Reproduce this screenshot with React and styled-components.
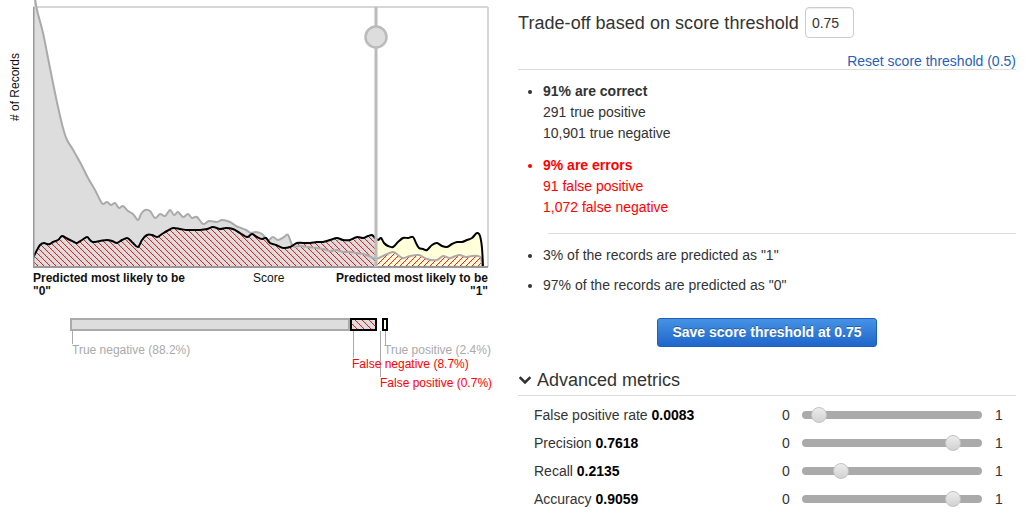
import React from 'react';
import styled, { createGlobalStyle } from 'styled-components';

const GlobalStyle = createGlobalStyle`
  html, body { margin: 0; padding: 0; background: #fff; }
  body { font-family: "Liberation Sans", Arial, Helvetica, sans-serif; color: #333; }
`;

const Page = styled.div`
  display: flex;
  width: 1035px;
  height: 514px;
  overflow: hidden;
`;

const LeftCol = styled.div`
  width: 505px;
  flex: none;
`;

const ChartRow = styled.div`
  display: flex;
  height: 268px;
`;

const AxisTitle = styled.div`
  width: 33px;
  flex: none;
  display: flex;
  justify-content: center;
  align-items: flex-start;
  padding: 53px 3px 0 0;
  box-sizing: border-box;
`;

const AxisText = styled.span`
  writing-mode: vertical-rl;
  transform: rotate(180deg);
  font-size: 12px;
  line-height: 12px;
  color: #111;
  white-space: nowrap;
`;

const ChartSvg = styled.svg`
  display: block;
  flex: none;
`;

const ScaleLabels = styled.div`
  display: flex;
  margin-left: 33px;
  width: 455px;
  padding-top: 4px;
  font-size: 12px;
  line-height: 13px;
  color: #111;
`;

const EndLabel = styled.div`
  font-weight: bold;
  flex: ${p => (p.$grow ? 1 : 'none')};
  width: ${p => (p.$grow ? 'auto' : '220px')};
  text-align: ${p => p.$align};
`;

const MidLabel = styled.div`
  flex: none;
`;

const BarSvg = styled.svg`
  display: block;
  margin-top: 12px;
  overflow: visible;
`;

const TickLabel = styled.text`
  font-size: 12px;
  font-family: "Liberation Sans", Arial, sans-serif;
  fill: ${p => (p.$red ? '#f00' : '#aaa')};
`;

const RightCol = styled.div`
  width: 530px;
  flex: none;
  box-sizing: border-box;
  padding: 0 19px 0 13px;
`;

const Header = styled.div`
  display: flex;
  align-items: center;
  gap: 6px;
  margin-top: 7px;
  height: 31px;
`;

const Title = styled.h2`
  margin: 0;
  font-size: 18px;
  font-weight: normal;
  color: #333;
  line-height: 22px;
  letter-spacing: 0.05px;
`;

const ThresholdInput = styled.input`
  width: 49px;
  height: 31px;
  box-sizing: border-box;
  border: 1px solid #ccc;
  border-radius: 4px;
  padding: 0 0 0 6px;
  font-family: inherit;
  font-size: 14px;
  color: #333;
  box-shadow: inset 0 1px 1px rgba(0, 0, 0, 0.075);
  outline: none;
`;

const ResetRow = styled.div`
  margin-top: 15px;
  height: 16px;
  line-height: 16px;
  text-align: right;
  border-bottom: 1px solid #ddd;
`;

const ResetLink = styled.a`
  font-size: 14px;
  color: #2a5fb4;
  text-decoration: none;
  cursor: pointer;
`;

const BulletList = styled.ul`
  list-style: none;
  margin: 0;
  padding: 11px 0 0 25px;
`;

const Item = styled.li`
  position: relative;
  font-size: 14px;
  line-height: 21px;
  color: ${p => (p.$red ? '#f00' : '#333')};
  margin-top: ${p => p.$gap || 0}px;
  &::before {
    content: '';
    position: absolute;
    left: -15px;
    top: 9px;
    width: 4px;
    height: 4px;
    border-radius: 50%;
    background: currentColor;
  }
`;

const Strong = styled.strong`
  font-weight: bold;
`;

const Divider = styled.hr`
  margin: 15px 0 0 30px;
  border: 0;
  border-top: 1px solid #ddd;
  height: 0;
`;

const ButtonRow = styled.div`
  display: flex;
  justify-content: center;
  margin-top: 22px;
`;

const SaveButton = styled.button`
  height: 29px;
  padding: 0 14px;
  border: 1px solid #1d5fbf;
  border-radius: 3px;
  background: linear-gradient(#4592e6, #1f66c9);
  color: #fff;
  font-family: inherit;
  font-size: 14px;
  font-weight: bold;
  line-height: 27px;
  text-shadow: 0 -1px 0 rgba(0, 0, 0, 0.3);
  cursor: pointer;
`;

const AdvancedHeader = styled.div`
  display: flex;
  align-items: center;
  gap: 6px;
  margin-top: 22px;
  padding: 0 0 4px 1px;
  border-bottom: 1px solid #ddd;
  font-size: 18px;
  line-height: 22px;
  color: #333;
`;

const MetricList = styled.div`
  margin-top: 5px;
`;

const MetricRow = styled.div`
  display: flex;
  align-items: center;
  height: 28px;
  padding-left: 16px;
  font-size: 14px;
`;

const MetricLabel = styled.div`
  width: 248px;
  flex: none;
  color: #333;
  & b { color: #000; }
`;

const RangeEnd = styled.div`
  width: ${p => p.$w}px;
  flex: none;
  margin-left: ${p => p.$ml || 0}px;
  color: #333;
`;

const Track = styled.div`
  position: relative;
  width: 180px;
  height: 8px;
  border-radius: 4px;
  background: #aaa;
  flex: none;
`;

const Thumb = styled.div`
  position: absolute;
  top: -4px;
  width: 16px;
  height: 16px;
  box-sizing: border-box;
  border-radius: 50%;
  border: 1px solid #c3c3c3;
  background: linear-gradient(#ececec, #d2d2d2);
  margin-left: -8px;
`;

function smooth(pts) {
  let d = `M${pts[0][0]},${pts[0][1]}`;
  for (let i = 0; i < pts.length - 1; i++) {
    const p0 = pts[i - 1] || pts[i];
    const p1 = pts[i];
    const p2 = pts[i + 1];
    const p3 = pts[i + 2] || p2;
    const c1x = p1[0] + (p2[0] - p0[0]) / 6;
    const c1y = p1[1] + (p2[1] - p0[1]) / 6;
    const c2x = p2[0] - (p3[0] - p1[0]) / 6;
    const c2y = p2[1] - (p3[1] - p1[1]) / 6;
    d += ` C${c1x.toFixed(2)},${c1y.toFixed(2)} ${c2x.toFixed(2)},${c2y.toFixed(2)} ${p2[0]},${p2[1]}`;
  }
  return d;
}

const grayPts = [
  [34, -8], [37, 10], [43, 33], [48, 58], [53, 83], [58, 107], [63, 128], [67, 140], [72, 148], [76, 155],
  [82, 166], [88, 178], [95, 190], [100, 200], [103, 204], [107, 202], [111, 205], [115, 203], [119, 208],
  [123, 206], [128, 211], [133, 214], [138, 220], [141, 214], [145, 210], [150, 211], [155, 218], [160, 214],
  [165, 216], [170, 210], [174, 215], [178, 212], [183, 217], [188, 214], [192, 218], [197, 217], [203, 224],
  [209, 221], [217, 222], [222, 220], [230, 222], [236, 226], [241, 228], [246, 230], [251, 233], [256, 232],
  [262, 234], [268, 240], [273, 237], [278, 240], [284, 237], [288, 235], [293, 246], [300, 246], [308, 247],
  [316, 248], [323, 249], [330, 251], [337, 250], [343, 252], [350, 252], [357, 253], [363, 254], [369, 256],
  [375, 259], [379, 258], [385, 255], [393, 252], [398, 255], [403, 258], [410, 256], [419, 255], [427, 259],
  [437, 260], [443, 256], [450, 258], [459, 255], [466, 257], [472, 256], [478, 256], [481, 258], [482, 267]
];

const blackPts = [
  [33, 258], [36, 252], [40, 245], [44, 243], [47, 244], [50, 244], [53, 242], [58, 240], [62, 236], [66, 238],
  [70, 240], [74, 242], [77, 243], [82, 240], [87, 237], [90, 240], [93, 242], [100, 241], [107, 240], [112, 241],
  [117, 243], [122, 240], [127, 238], [130, 240], [133, 243], [138, 247], [142, 240], [147, 235], [152, 235],
  [157, 237], [162, 234], [167, 231], [173, 228], [180, 229], [187, 230], [193, 230], [200, 230], [207, 229],
  [213, 227], [220, 229], [226, 228], [233, 229], [240, 233], [247, 237], [252, 234], [257, 237], [262, 239],
  [266, 238], [270, 243], [276, 245], [283, 248], [290, 247], [297, 243], [303, 243], [310, 243], [317, 242],
  [323, 242], [330, 240], [337, 238], [343, 240], [350, 240], [357, 237], [363, 238], [368, 236], [372, 235],
  [375, 238], [378, 240], [381, 238], [384, 243], [388, 246], [393, 247], [398, 242], [403, 238], [408, 238],
  [413, 237], [416, 243], [419, 248], [423, 249], [427, 250], [432, 245], [437, 243], [442, 246], [447, 247],
  [452, 244], [457, 242], [462, 242], [467, 240], [472, 238], [477, 233], [480, 236], [482, 248], [483, 267]
];

const grayLine = smooth(grayPts);
const blackLine = smooth(blackPts);
const grayArea = `${grayLine} L482,267 L33,267 Z`;
const blackArea = `${blackLine} L483,267 L33,267 Z`;

const THRESH_X = 376;

function DistributionChart() {
  return (
    <ChartSvg width="462" height="268" viewBox="33 0 462 268">
      <defs>
        <pattern id="hatchBack" width="6" height="6" patternUnits="userSpaceOnUse">
          <rect width="6" height="6" fill="#ddd" />
          <path d="M0,0 L6,6 M-1,5 L1,7 M5,-1 L7,1" stroke="#f00" strokeWidth="0.9" />
        </pattern>
        <pattern id="hatchFwd" width="6" height="6" patternUnits="userSpaceOnUse">
          <path d="M0,6 L6,0 M-1,1 L1,-1 M5,7 L7,5" stroke="#f00" strokeWidth="0.9" />
        </pattern>
        <clipPath id="leftSide">
          <rect x="33" y="0" width={THRESH_X - 33} height="268" />
        </clipPath>
        <clipPath id="rightSide">
          <rect x={THRESH_X} y="0" width={490 - THRESH_X} height="268" />
        </clipPath>
      </defs>

      <line x1="33" y1="7" x2="488" y2="7" stroke="#d6d6d6" strokeWidth="2" />
      <line x1="488" y1="7" x2="488" y2="267" stroke="#d6d6d6" strokeWidth="2" />

      <g clipPath="url(#leftSide)">
        <path d={grayArea} fill="#ddd" />
        <path d={blackArea} fill="url(#hatchBack)" />
      </g>
      <g clipPath="url(#rightSide)">
        <path d={blackArea} fill="#ffffd9" />
        <path d={grayArea} fill="url(#hatchFwd)" />
      </g>

      <path d={grayLine} fill="none" stroke="#aaa" strokeWidth="2" strokeLinejoin="round" />
      <path d={blackLine} fill="none" stroke="#000" strokeWidth="2" strokeLinejoin="round" />

      <line x1="33.5" y1="7" x2="33.5" y2="268" stroke="#999" strokeWidth="2" />
      <line x1="33" y1="267" x2="488" y2="267" stroke="#999" strokeWidth="2" />

      <line x1={THRESH_X} y1="7" x2={THRESH_X} y2="267" stroke="#bbb" strokeWidth="3" />
      <circle cx={THRESH_X} cy="37" r="10.5" fill="#ddd" stroke="#bbb" strokeWidth="2.5" />
    </ChartSvg>
  );
}

function OutcomeBar() {
  return (
    <BarSvg width="500" height="90" viewBox="0 310 500 90">
      <defs>
        <pattern id="barHatch" width="7" height="7" patternUnits="userSpaceOnUse">
          <rect width="7" height="7" fill="#ddd" />
          <path d="M0,0 L7,7 M-1,6 L1,8 M6,-1 L8,1" stroke="#f00" strokeWidth="0.9" />
        </pattern>
      </defs>
      <rect x="71" y="319" width="278" height="11" fill="#ddd" stroke="#aaa" strokeWidth="2" />
      <rect x="351" y="319" width="25" height="11" fill="url(#barHatch)" stroke="#000" strokeWidth="2" />
      <rect x="383" y="319" width="4" height="11" fill="#ffffd9" stroke="#000" strokeWidth="2" />

      <line x1="72.5" y1="331" x2="72.5" y2="344" stroke="#aaa" strokeWidth="1" />
      <line x1="353.5" y1="331" x2="353.5" y2="358" stroke="#aaa" strokeWidth="1" />
      <line x1="380.5" y1="331" x2="380.5" y2="377" stroke="#aaa" strokeWidth="1" />
      <line x1="385.5" y1="331" x2="385.5" y2="345" stroke="#aaa" strokeWidth="1" />

      <TickLabel x="72" y="354">True negative (88.2%)</TickLabel>
      <TickLabel x="384" y="354">True positive (2.4%)</TickLabel>
      <TickLabel x="352" y="368" $red>False negative (8.7%)</TickLabel>
      <TickLabel x="380" y="387" $red>False positive (0.7%)</TickLabel>
    </BarSvg>
  );
}

const metrics = [
  { name: 'False positive rate', value: '0.0083', pos: 9.4 },
  { name: 'Precision', value: '0.7618', pos: 83.9 },
  { name: 'Recall', value: '0.2135', pos: 21.7 },
  { name: 'Accuracy', value: '0.9059', pos: 83.9 }
];

function Chevron() {
  return (
    <svg width="12" height="9" viewBox="0 0 12 9">
      <path d="M1.5,2 L6,6.5 L10.5,2" fill="none" stroke="#333" strokeWidth="2.6" strokeLinecap="square" />
    </svg>
  );
}

export default function App() {
  return (
    <>
      <GlobalStyle />
      <Page>
        <LeftCol>
          <ChartRow>
            <AxisTitle>
              <AxisText># of Records</AxisText>
            </AxisTitle>
            <DistributionChart />
          </ChartRow>
          <ScaleLabels>
            <EndLabel $align="left">Predicted most likely to be<br />"0"</EndLabel>
            <MidLabel>Score</MidLabel>
            <EndLabel $align="right" $grow>Predicted most likely to be<br />"1"</EndLabel>
          </ScaleLabels>
          <OutcomeBar />
        </LeftCol>

        <RightCol>
          <Header>
            <Title>Trade-off based on score threshold</Title>
            <ThresholdInput defaultValue="0.75" />
          </Header>
          <ResetRow>
            <ResetLink>Reset score threshold (0.5)</ResetLink>
          </ResetRow>

          <BulletList>
            <Item>
              <Strong>91% are correct</Strong><br />
              291 true positive<br />
              10,901 true negative
            </Item>
            <Item $red $gap={11}>
              <Strong>9% are errors</Strong><br />
              91 false positive<br />
              1,072 false negative
            </Item>
          </BulletList>

          <Divider />

          <BulletList>
            <Item>3% of the records are predicted as "1"</Item>
            <Item $gap={9}>97% of the records are predicted as "0"</Item>
          </BulletList>

          <ButtonRow>
            <SaveButton>Save score threshold at 0.75</SaveButton>
          </ButtonRow>

          <AdvancedHeader>
            <Chevron />
            <span>Advanced metrics</span>
          </AdvancedHeader>

          <MetricList>
            {metrics.map(m => (
              <MetricRow key={m.name}>
                <MetricLabel>{m.name} <b>{m.value}</b></MetricLabel>
                <RangeEnd $w={20}>0</RangeEnd>
                <Track>
                  <Thumb style={{ left: `${m.pos}%` }} />
                </Track>
                <RangeEnd $w={10} $ml={13}>1</RangeEnd>
              </MetricRow>
            ))}
          </MetricList>
        </RightCol>
      </Page>
    </>
  );
}
